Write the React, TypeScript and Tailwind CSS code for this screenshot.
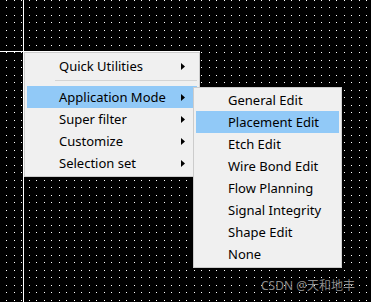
const MAIN_ITEMS = [
  { label: "Application Mode", active: true },
  { label: "Super filter" },
  { label: "Customize" },
  { label: "Selection set" },
];

const MODES = [
  "General Edit",
  "Placement Edit",
  "Etch Edit",
  "Wire Bond Edit",
  "Flow Planning",
  "Signal Integrity",
  "Shape Edit",
  "None",
];

function Arrow() {
  return (
    <svg width="4" height="7" viewBox="0 0 4 7" className="ml-auto mr-[12px] shrink-0">
      <polygon points="0,0 4,3.5 0,7" fill="#000" />
    </svg>
  );
}

function MenuRow({ label, active, submenu }: { label: string; active?: boolean; submenu?: boolean }) {
  return (
    <div className={`flex h-[22px] items-center pl-[32px] pt-px ${active ? "bg-[#91c9f7]" : ""}`}>
      <span>{label}</span>
      {submenu && <Arrow />}
    </div>
  );
}

function DotGrid() {
  return (
    <svg className="absolute inset-0" width="371" height="302">
      <defs>
        <pattern id="dots" width="15" height="15" patternUnits="userSpaceOnUse">
          <rect x="6" y="0" width="1" height="1" fill="#fff" />
          <rect x="14" y="0" width="1" height="1" fill="#fff" />
          <rect x="6" y="7" width="1" height="1" fill="#fff" />
          <rect x="14" y="7" width="1" height="1" fill="#fff" />
        </pattern>
      </defs>
      <rect width="371" height="302" fill="url(#dots)" />
    </svg>
  );
}

export default function App() {
  return (
    <div
      className="relative h-[302px] w-[371px] overflow-hidden bg-black text-[13px] text-black"
      style={{ fontFamily: '"Noto Sans", "Liberation Sans", sans-serif' }}
    >
      <DotGrid />
      {/* cursor crosshair */}
      <div className="absolute left-[23px] top-0 h-full w-px bg-white" />
      <div className="absolute left-0 top-[51px] h-px w-[200px] bg-white" />

      {/* context menu */}
      <div className="absolute left-[24px] top-[52px] flex w-[176px] flex-col border border-[#cccccc] bg-[#f0f0f0] p-[2px]">
        <MenuRow label="Quick Utilities" submenu />
        <div className="mb-[5px] ml-[28px] mt-[3px] h-px bg-[#d4d4d4]" />
        {MAIN_ITEMS.map((item) => (
          <MenuRow key={item.label} label={item.label} active={item.active} submenu />
        ))}
      </div>

      {/* Application Mode submenu */}
      <div className="absolute left-[193px] top-[87px] flex w-[149px] flex-col border border-[#cccccc] bg-[#f0f0f0] px-[2px] pb-[2px] pt-px">
        {MODES.map((mode) => (
          <MenuRow key={mode} label={mode} active={mode === "Placement Edit"} />
        ))}
      </div>

      <div
        className="absolute bottom-[7px] right-[16px] text-[12px] text-[#8c8c8c]"
        style={{ fontFamily: '"Noto Sans", "Noto Sans CJK SC", sans-serif' }}
      >
        CSDN @天和地丰
      </div>
    </div>
  );
}
